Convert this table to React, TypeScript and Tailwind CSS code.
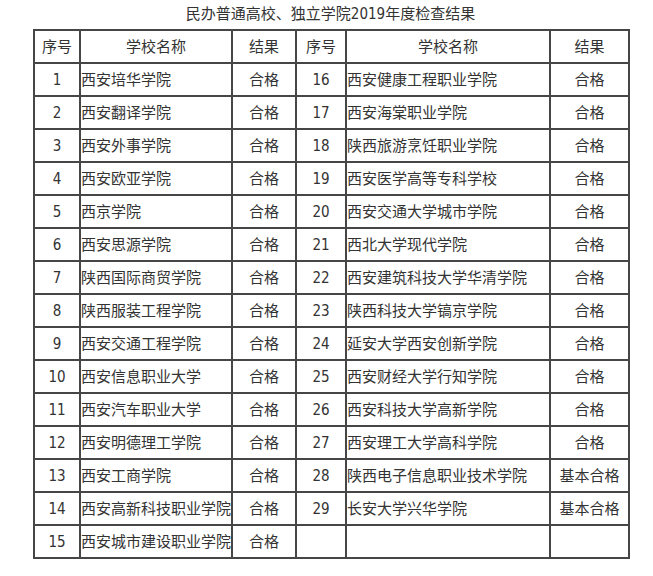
const rows: [string, string, string][] = [
  ['1', '西安培华学院', '合格'],
  ['2', '西安翻译学院', '合格'],
  ['3', '西安外事学院', '合格'],
  ['4', '西安欧亚学院', '合格'],
  ['5', '西京学院', '合格'],
  ['6', '西安思源学院', '合格'],
  ['7', '陕西国际商贸学院', '合格'],
  ['8', '陕西服装工程学院', '合格'],
  ['9', '西安交通工程学院', '合格'],
  ['10', '西安信息职业大学', '合格'],
  ['11', '西安汽车职业大学', '合格'],
  ['12', '西安明德理工学院', '合格'],
  ['13', '西安工商学院', '合格'],
  ['14', '西安高新科技职业学院', '合格'],
  ['15', '西安城市建设职业学院', '合格'],
];

const rightRows: [string, string, string][] = [
  ['16', '西安健康工程职业学院', '合格'],
  ['17', '西安海棠职业学院', '合格'],
  ['18', '陕西旅游烹饪职业学院', '合格'],
  ['19', '西安医学高等专科学校', '合格'],
  ['20', '西安交通大学城市学院', '合格'],
  ['21', '西北大学现代学院', '合格'],
  ['22', '西安建筑科技大学华清学院', '合格'],
  ['23', '陕西科技大学镐京学院', '合格'],
  ['24', '延安大学西安创新学院', '合格'],
  ['25', '西安财经大学行知学院', '合格'],
  ['26', '西安科技大学高新学院', '合格'],
  ['27', '西安理工大学高科学院', '合格'],
  ['28', '陕西电子信息职业技术学院', '基本合格'],
  ['29', '长安大学兴华学院', '基本合格'],
  ['', '', ''],
];

const cell = 'border-2 border-[#464646] h-[33px] p-0 whitespace-nowrap';

export default function App() {
  return (
    <div
      className="w-[653px] h-[576px] bg-white text-[#333] text-[15px]"
      style={{ fontFamily: '"DejaVu Sans Condensed", "Noto Sans CJK SC", sans-serif' }}
    >
      <div className="ml-[33px] w-[595px] pt-[4px] h-[29px] leading-[20px] text-center">
        民办普通高校、独立学院2019年度检查结果
      </div>
      <table className="ml-[33px] w-[595px] table-fixed border-collapse leading-[20px]">
        <colgroup>
          <col className="w-[46px]" />
          <col className="w-[152px]" />
          <col className="w-[64px]" />
          <col className="w-[50px]" />
          <col className="w-[204px]" />
          <col className="w-[79px]" />
        </colgroup>
        <thead>
          <tr>
            <th className={`${cell} font-normal text-center`}>序号</th>
            <th className={`${cell} font-normal text-center`}>学校名称</th>
            <th className={`${cell} font-normal text-center`}>结果</th>
            <th className={`${cell} font-normal text-center`}>序号</th>
            <th className={`${cell} font-normal text-center`}>学校名称</th>
            <th className={`${cell} font-normal text-center`}>结果</th>
          </tr>
        </thead>
        <tbody>
          {rows.map((r, i) => {
            const s = rightRows[i];
            return (
              <tr key={r[0]}>
                <td className={`${cell} text-center`}>{r[0]}</td>
                <td className={`${cell} text-left`}>{r[1]}</td>
                <td className={`${cell} text-center`}>{r[2]}</td>
                <td className={`${cell} text-center`}>{s[0]}</td>
                <td className={`${cell} text-left`}>{s[1]}</td>
                <td className={`${cell} text-center`}>{s[2]}</td>
              </tr>
            );
          })}
        </tbody>
      </table>
    </div>
  );
}
